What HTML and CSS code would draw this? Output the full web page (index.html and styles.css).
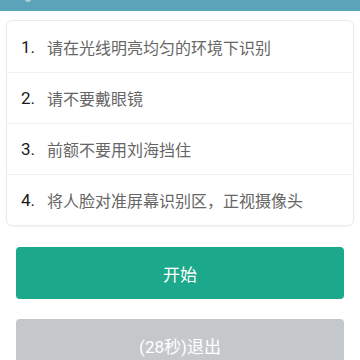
FILE: index.html
```html
<!DOCTYPE html>
<html lang="zh-CN">

<head>
    <meta charset="UTF-8">
    <meta name="viewport" content="width=device-width, initial-scale=1.0">
    <title>人脸识别</title>
    <link rel="stylesheet" href="styles.css">
</head>

<body>
    <!-- 顶部栏 -->
    <div class="top-bar">
        <span class="back-dot"></span>
    </div>
    <!-- 注意事项 -->
    <div class="tips-card">
        <div class="tip-row"><span class="tip-num">1.</span><span class="tip-text">请在光线明亮均匀的环境下识别</span></div>
        <div class="tip-row"><span class="tip-num">2.</span><span class="tip-text">请不要戴眼镜</span></div>
        <div class="tip-row"><span class="tip-num">3.</span><span class="tip-text">前额不要用刘海挡住</span></div>
        <div class="tip-row"><span class="tip-num">4.</span><span class="tip-text">将人脸对准屏幕识别区，正视摄像头</span></div>
    </div>
    <!-- 按钮 -->
    <div class="btn-group">
        <button class="start-btn">开始</button>
        <button class="exit-btn">(28秒)退出</button>
    </div>
</body>

</html>
```

FILE: styles.css
```css
/* 整体样式 */
body {
    margin: 0;
    background-color: #fff;
    font-family: Roboto, "Noto Sans CJK SC", sans-serif;
    overflow: hidden;
}

/* 顶部栏 */
.top-bar {
    height: 11px;
    background-color: #5ba3b8;
    position: relative;
}

.back-dot {
    position: absolute;
    left: 25px;
    top: -3px;
    width: 6px;
    height: 5px;
    border-radius: 50%;
    background-color: rgba(255, 255, 255, 0.5);
}

/* 注意事项卡片 */
.tips-card {
    margin: 9px 6px 0;
    border: 1px solid #ebebeb;
    border-radius: 6px;
    box-shadow: 0 1px 2px rgba(0, 0, 0, 0.05);
}

.tip-row {
    display: flex;
    align-items: center;
    height: 50px;
    padding-left: 14px;
    border-top: 1px solid #f2f2f2;
}

.tip-row:first-child {
    height: 51px;
    border-top: none;
}

.tip-num {
    width: 26px;
    font-size: 17px;
    color: #1a1a1a;
}

.tip-text {
    font-size: 16px;
    color: #666;
    font-family: "Noto Sans CJK SC", sans-serif;
}

/* 按钮区域 */
.btn-group {
    display: flex;
    flex-direction: column;
    gap: 20px;
    padding: 21px 16px 0;
}

.btn-group button {
    height: 52px;
    border: none;
    border-radius: 4px;
    color: #fff;
    font-size: 17px;
    font-family: Roboto, "Noto Sans CJK SC", sans-serif;
}

.start-btn {
    background-color: #1ca88a;
}

.exit-btn {
    background-color: #c4c8cb;
    color: #f4f5f6;
}
```
